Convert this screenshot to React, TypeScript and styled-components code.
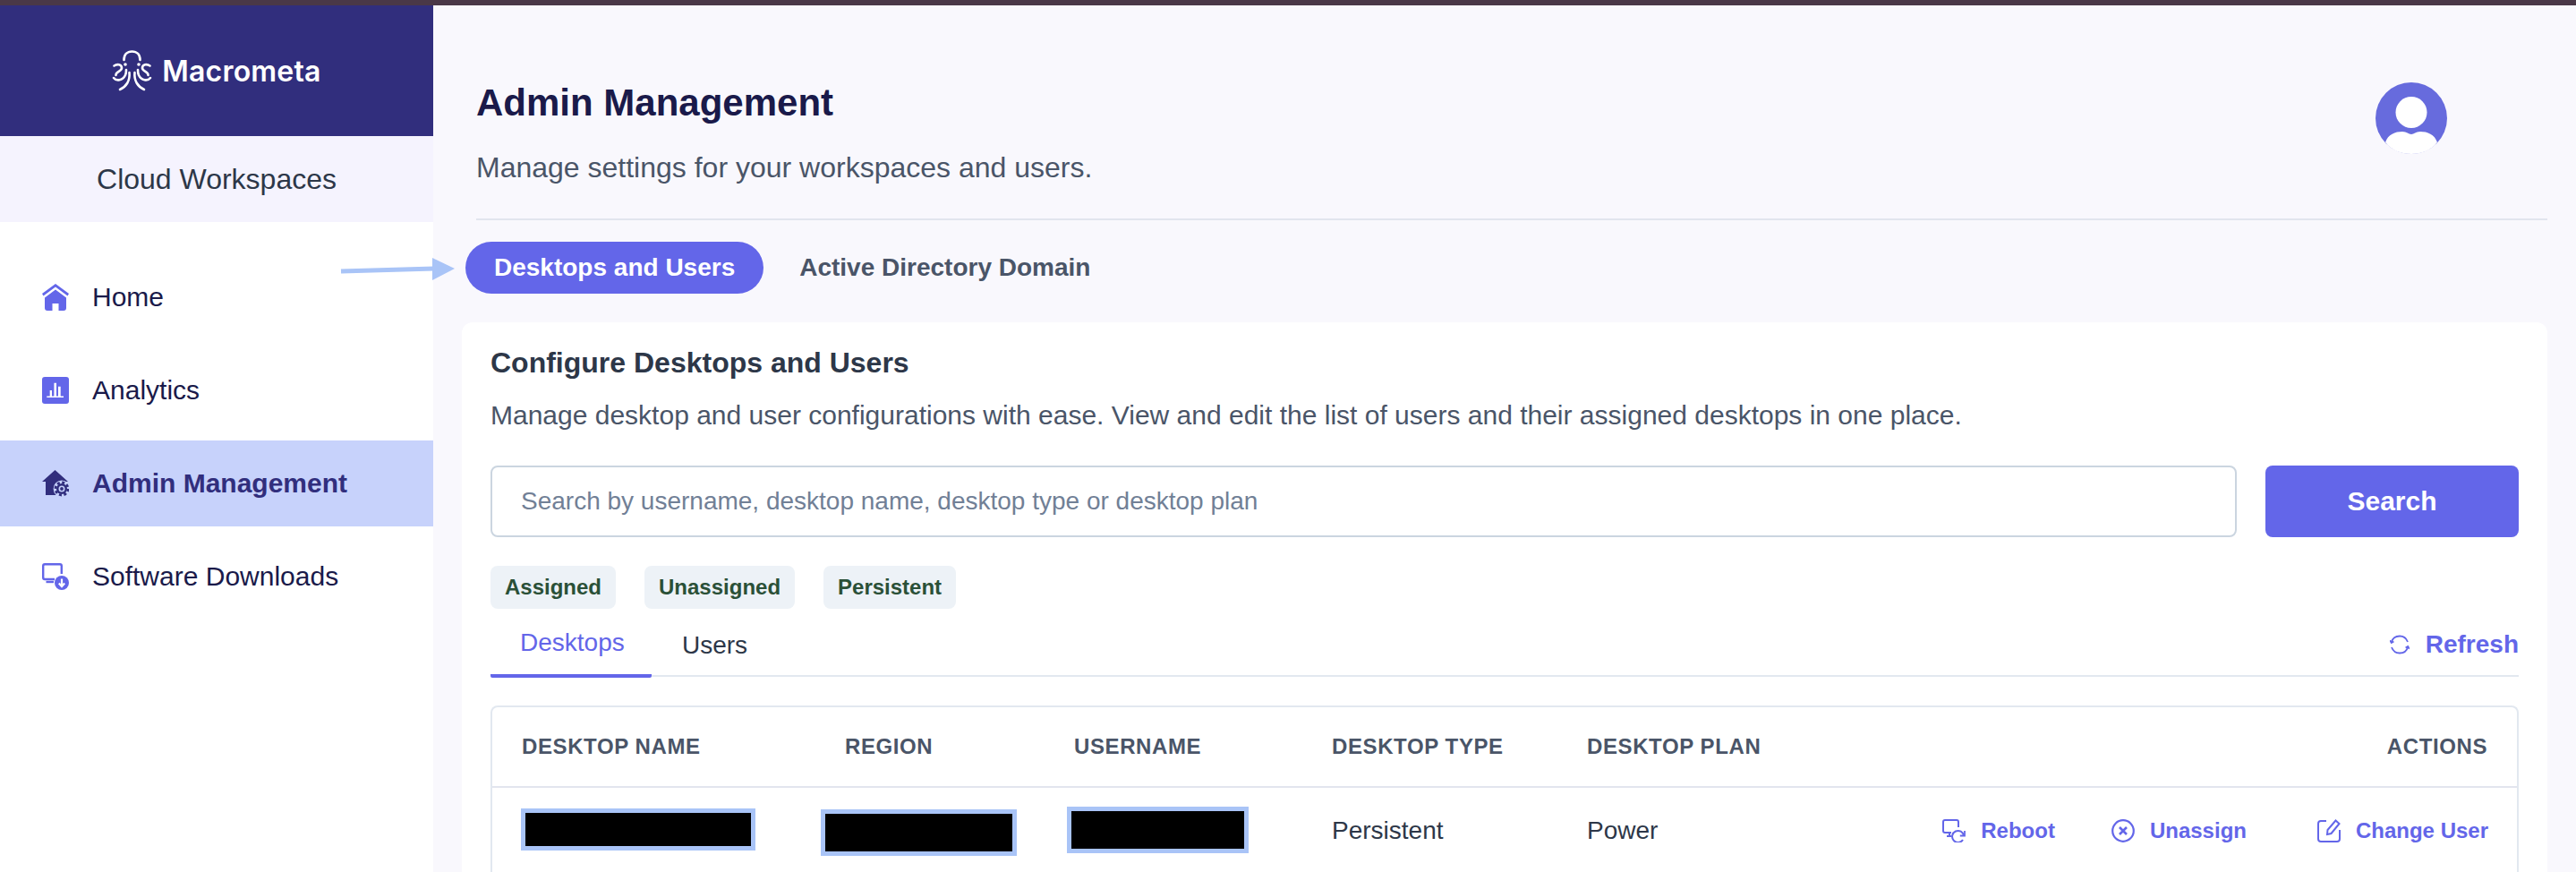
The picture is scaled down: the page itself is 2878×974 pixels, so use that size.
import React from 'react';
import styled, { createGlobalStyle } from 'styled-components';

const Global = createGlobalStyle`
  html, body { margin: 0; padding: 0; height: 974px; overflow: hidden; background: #f9f8fd; }
  body { font-family: "Liberation Sans", Arial, sans-serif; }
  #root { height: 974px; }
  * { box-sizing: border-box; }
`;

const Page = styled.div`
  position: relative;
  width: 2878px;
  height: 974px;
  overflow: hidden;
  display: flex;
  flex-direction: column;
`;
const TopStrip = styled.div`
  height: 6px;
  flex: none;
  background: #4a3847;
`;
const Body = styled.div`
  flex: 1;
  display: flex;
  min-height: 0;
`;
const Sidebar = styled.aside`
  width: 484px;
  flex: none;
  background: #fff;
  display: flex;
  flex-direction: column;
`;
const Brand = styled.div`
  height: 146px;
  background: #312e7d;
  display: flex;
  align-items: center;
  justify-content: center;
  gap: 11px;
  color: #fff;
`;
const BrandName = styled.span`
  font-family: "Inter", sans-serif;
  font-weight: 600;
  font-size: 32px;
  letter-spacing: 0.2px;
`;
const Product = styled.div`
  height: 96px;
  background: #f5f3fe;
  color: #2d3748;
  font-size: 32px;
  display: flex;
  align-items: center;
  justify-content: center;
`;
const Nav = styled.nav`
  display: flex;
  flex-direction: column;
  gap: 8px;
  padding-top: 36px;
`;
const NavItem = styled.div<{ $active?: boolean }>`
  height: 96px;
  display: flex;
  align-items: center;
  gap: 26px;
  padding-left: 47px;
  font-size: 30px;
  font-weight: ${p => (p.$active ? 700 : 400)};
  color: ${p => (p.$active ? '#312e7d' : '#1a1a4a')};
  background: ${p => (p.$active ? '#c7d2fb' : 'transparent')};
`;
const NavIcon = styled.svg`
  width: 30px;
  height: 30px;
  flex: none;
`;
const Main = styled.main`
  flex: 1;
  min-width: 0;
  padding: 0 32px 0 48px;
  display: flex;
  flex-direction: column;
  background: #f9f8fd;
`;
const Header = styled.header`
  height: 240px;
  flex: none;
  border-bottom: 2px solid #e2e5ee;
  display: flex;
  justify-content: space-between;
  padding-top: 85px;
`;
const Title = styled.h1`
  margin: 0 0 30px;
  font-size: 42px;
  line-height: 48px;
  font-weight: 700;
  color: #1a1a4a;
`;
const Subtitle = styled.p`
  margin: 0;
  font-size: 32px;
  line-height: 36px;
  color: #4a5568;
`;
const Avatar = styled.svg`
  width: 80px;
  height: 80px;
  margin: 1px 112px 0 0;
  flex: none;
`;
const PillRow = styled.div`
  display: flex;
  align-items: center;
  gap: 40px;
  height: 58px;
  margin: 24px 0 32px -12px;
  flex: none;
`;
const Pill = styled.div<{ $active?: boolean }>`
  height: 58px;
  padding: 0 ${p => (p.$active ? 32 : 0)}px;
  display: flex;
  align-items: center;
  border-radius: 29px;
  font-size: 28px;
  font-weight: 700;
  color: ${p => (p.$active ? '#fff' : '#4a5568')};
  background: ${p => (p.$active ? '#6366e9' : 'transparent')};
`;
const Card = styled.section`
  flex: 1;
  margin-left: -16px;
  background: #fff;
  border-radius: 12px 12px 0 0;
  padding: 27px 32px 0;
  display: flex;
  flex-direction: column;
`;
const CardTitle = styled.h2`
  margin: 0 0 24px;
  font-size: 32px;
  line-height: 36px;
  font-weight: 700;
  color: #2d3748;
`;
const CardText = styled.p`
  margin: 0 0 39px;
  font-size: 30px;
  line-height: 34px;
  color: #4a5568;
`;
const SearchRow = styled.div`
  display: flex;
  gap: 32px;
  height: 80px;
  flex: none;
`;
const SearchBox = styled.div`
  flex: 1;
  border: 2px solid #cbd5e0;
  border-radius: 8px;
  background: #fff;
  display: flex;
  align-items: center;
  padding: 0 32px;
  font-size: 28px;
  color: #718096;
`;
const SearchButton = styled.button`
  width: 283px;
  border: 0;
  border-radius: 8px;
  background: #6366e9;
  color: #fff;
  font: 700 30px "Liberation Sans", Arial, sans-serif;
`;
const Tags = styled.div`
  display: flex;
  gap: 32px;
  margin-top: 32px;
  height: 48px;
  flex: none;
`;
const Tag = styled.div`
  display: flex;
  align-items: center;
  padding: 0 16px;
  border-radius: 8px;
  background: #edf2f7;
  color: #2a5037;
  font-size: 24px;
  font-weight: 700;
`;
const TabBar = styled.div`
  display: flex;
  align-items: stretch;
  height: 76px;
  border-bottom: 2px solid #e2e8f0;
  flex: none;
`;
const Tab = styled.div<{ $active?: boolean }>`
  width: ${p => (p.$active ? '180px' : 'auto')};
  padding: ${p => (p.$active ? '3px 0 0 33px' : '8px 0 0 34px')};
  font-size: 28px;
  color: ${p => (p.$active ? '#6366e9' : '#2d3748')};
  display: flex;
  align-items: center;
  margin-bottom: -3px;
  border-bottom: 4px solid ${p => (p.$active ? '#6366e9' : 'transparent')};
  border-radius: 0 0 2px 2px;
`;
const Refresh = styled.div`
  margin-left: auto;
  display: flex;
  align-items: center;
  gap: 18px;
  padding-top: 6px;
  font-size: 28px;
  font-weight: 700;
  color: #6366e9;
`;
const Table = styled.div`
  margin-top: 32px;
  border: 2px solid #e2e8f0;
  border-bottom: 0;
  border-radius: 8px 8px 0 0;
  flex: 1;
`;
const Row = styled.div<{ $head?: boolean }>`
  display: grid;
  grid-template-columns: 361px 256px 288px 285px 285px 1fr;
  align-items: center;
  height: ${p => (p.$head ? 90 : 96)}px;
  padding-left: 33px;
  ${p => p.$head && 'border-bottom: 2px solid #e2e5ee;'}
`;
const HeadCell = styled.div<{ $right?: boolean }>`
  font-size: 24px;
  font-weight: 700;
  letter-spacing: 0.6px;
  color: #4a5568;
  ${p => p.$right && 'text-align: right; padding-right: 33px;'}
`;
const Cell = styled.div`
  font-size: 28px;
  color: #2d3748;
`;
const Redacted = styled.div<{ $w: number; $h: number; $dx: number; $dy: number }>`
  width: ${p => p.$w}px;
  height: ${p => p.$h}px;
  margin: ${p => p.$dy}px 0 0 ${p => p.$dx}px;
  background: #000;
  border: 5px solid #a9c4f7;
`;
const Actions = styled.div`
  display: flex;
  justify-content: flex-end;
  padding-right: 32px;
`;
const Action = styled.div<{ $space?: number }>`
  display: flex;
  align-items: center;
  gap: 17px;
  margin-left: ${p => p.$space ?? 0}px;
  font-size: 24px;
  font-weight: 700;
  color: #6366e9;
`;
const ActionIcon = styled.svg`
  width: 26px;
  height: 26px;
  flex: none;
`;
const ArrowMark = styled.svg`
  position: absolute;
  left: 375px;
  top: 280px;
  width: 140px;
  height: 40px;
`;

const Octopus = () => (
  <svg width="45" height="46" viewBox="0 0 45 46" fill="none" stroke="#fff" strokeWidth="2.6" strokeLinecap="round">
    <path d="M13.5 11 C13.5 5 17 1.5 22.5 1.5 C28 1.5 31.5 5 31.5 11" />
    <circle cx="15" cy="16" r="1.8" fill="#fff" stroke="none" />
    <circle cx="30" cy="16" r="1.8" fill="#fff" stroke="none" />
    <path d="M2.5 17.5 C6 15 11 16 11 20 C11 24 4 24 4.5 28" />
    <path d="M2 31 C5 35 12 34 15 28 C16 26 16 24 16 22" />
    <path d="M42.5 17.5 C39 15 34 16 34 20 C34 24 41 24 40.5 28" />
    <path d="M43 31 C40 35 33 34 30 28 C29 26 29 24 29 22" />
    <path d="M19.5 25 C20.5 34 16 41 9 44" />
    <path d="M25.5 25 C24.5 34 29 41 36 44" />
  </svg>
);

export default function App() {
  return (
    <Page>
      <Global />
      <TopStrip />
      <Body>
        <Sidebar>
          <Brand><Octopus /><BrandName>Macrometa</BrandName></Brand>
          <Product>Cloud Workspaces</Product>
          <Nav>
            <NavItem>
              <NavIcon viewBox="0 0 30 30" fill="#6366e9">
                <path d="M15 0 L30 11 L28.5 13.5 L15 3.5 L1.5 13.5 L0 11 Z" />
                <path d="M15 6.5 L27 15.5 V27 Q27 30 24 30 H18.5 V22 H11.5 V30 H6 Q3 30 3 27 V15.5 Z" />
              </NavIcon>
              Home
            </NavItem>
            <NavItem>
              <NavIcon viewBox="0 0 30 30">
                <rect width="30" height="30" rx="3" fill="#6366e9" />
                <path d="M5.3 21.5 H24 V23 H5.3 Z M8.7 15 H11 V21.5 H8.7 Z M13.4 6.7 H16 V21.5 H13.4 Z M18 10.7 H20.7 V21.5 H18 Z" fill="#fff" />
              </NavIcon>
              Analytics
            </NavItem>
            <NavItem $active>
              <NavIcon viewBox="0 0 30 30">
                <path d="M14.5 0 L29 13 H26 V28 H4 V13 H0 Z" fill="#312e7d" />
                <circle cx="22" cy="21" r="9.4" fill="#c7d2fb" />
                <circle cx="22" cy="21" r="6" fill="#312e7d" />
                <circle cx="22" cy="21" r="7" fill="none" stroke="#312e7d" strokeWidth="2.8" strokeDasharray="3 2.5" />
                <circle cx="22" cy="21" r="2.7" fill="none" stroke="#c7d2fb" strokeWidth="1.6" />
              </NavIcon>
              Admin Management
            </NavItem>
            <NavItem>
              <NavIcon viewBox="0 0 30 30" fill="none">
                <path d="M14 18 H3 Q1.2 18 1.2 16 V3 Q1.2 1.2 3 1.2 H20 Q21.8 1.2 21.8 3 V12" stroke="#6366e9" strokeWidth="2.4" />
                <path d="M4.5 21 H13" stroke="#6366e9" strokeWidth="2.4" />
                <circle cx="22" cy="22" r="8" fill="#6366e9" />
                <path d="M22 17.5 V25 M18.8 22.5 L22 26 L25.2 22.5" stroke="#fff" strokeWidth="2.2" />
              </NavIcon>
              Software Downloads
            </NavItem>
          </Nav>
        </Sidebar>
        <Main>
          <Header>
            <div>
              <Title>Admin Management</Title>
              <Subtitle>Manage settings for your workspaces and users.</Subtitle>
            </div>
            <Avatar viewBox="0 0 80 80">
              <circle cx="40" cy="40" r="40" fill="#676bdd" />
              <circle cx="40" cy="33.5" r="17.5" fill="#fff" />
              <path d="M11 67 C14 58 22 55 30 55 C35 55 37 58 40 58 C43 58 45 55 50 55 C58 55 66 58 69 67 C62 76 51 80 40 80 C29 80 18 76 11 67 Z" fill="#fff" />
            </Avatar>
          </Header>
          <PillRow>
            <Pill $active>Desktops and Users</Pill>
            <Pill>Active Directory Domain</Pill>
          </PillRow>
          <Card>
            <CardTitle>Configure Desktops and Users</CardTitle>
            <CardText>Manage desktop and user configurations with ease. View and edit the list of users and their assigned desktops in one place.</CardText>
            <SearchRow>
              <SearchBox>Search by username, desktop name, desktop type or desktop plan</SearchBox>
              <SearchButton>Search</SearchButton>
            </SearchRow>
            <Tags>
              <Tag>Assigned</Tag>
              <Tag>Unassigned</Tag>
              <Tag>Persistent</Tag>
            </Tags>
            <TabBar>
              <Tab $active>Desktops</Tab>
              <Tab>Users</Tab>
              <Refresh>
                <svg width="22" height="22" viewBox="0 0 22 22" fill="none" stroke="#6366e9" strokeWidth="1.8">
                  <path d="M1.8 8.5 C3 4 6.5 1.5 11 1.5 C15 1.5 18.5 4 20 8" />
                  <path d="M20.2 13.5 C19 18 15.5 20.5 11 20.5 C7 20.5 3.5 18 2 14" />
                  <path d="M0.2 6.2 L1.8 9 L4.4 7.4 M21.8 15.8 L20.2 13 L17.6 14.6" />
                </svg>
                Refresh
              </Refresh>
            </TabBar>
            <Table>
              <Row $head>
                <HeadCell>DESKTOP NAME</HeadCell>
                <HeadCell>REGION</HeadCell>
                <HeadCell>USERNAME</HeadCell>
                <HeadCell>DESKTOP TYPE</HeadCell>
                <HeadCell>DESKTOP PLAN</HeadCell>
                <HeadCell $right>ACTIONS</HeadCell>
              </Row>
              <Row>
                <Redacted $w={262} $h={47} $dx={-1} $dy={-3} />
                <Redacted $w={219} $h={52} $dx={-27} $dy={4} />
                <Redacted $w={203} $h={52} $dx={-8} $dy={-2} />
                <Cell>Persistent</Cell>
                <Cell>Power</Cell>
                <Actions>
                  <Action>
                    <ActionIcon viewBox="0 0 26 26" fill="none" stroke="#6366e9" strokeWidth="2">
                      <path d="M10 15 H3 Q1 15 1 13 V3 Q1 1 3 1 H16 Q18 1 18 3 V9" />
                      <path d="M5 19 H10 M8 15 V19" />
                      <path d="M24 18.5 A6.5 6.5 0 1 0 23 23" />
                      <path d="M25 13 V18.5 H19.8" strokeWidth="1.8" />
                    </ActionIcon>
                    Reboot
                  </Action>
                  <Action $space={63}>
                    <ActionIcon viewBox="0 0 26 26" fill="none" stroke="#6366e9" strokeWidth="2.2">
                      <circle cx="13" cy="13" r="11.8" />
                      <path d="M9 9 L17 17 M17 9 L9 17" strokeWidth="2.6" />
                    </ActionIcon>
                    Unassign
                  </Action>
                  <Action $space={79}>
                    <ActionIcon viewBox="0 0 26 26" fill="none" stroke="#6366e9" strokeWidth="2">
                      <path d="M10 2 H4 Q1 2 1 5 V22 Q1 25 4 25 H22 Q25 25 25 22 V12" />
                      <path d="M11 17 L11.5 12 L20.5 1.5 L24.5 5 L15.5 16 Z" />
                    </ActionIcon>
                    Change User
                  </Action>
                </Actions>
              </Row>
            </Table>
          </Card>
        </Main>
      </Body>
      <ArrowMark viewBox="0 0 140 40">
        <path d="M6 23 L110 20" stroke="#a9c4f7" strokeWidth="5" />
        <path d="M108 8 L133 20 L108 33 Z" fill="#a9c4f7" />
      </ArrowMark>
    </Page>
  );
}
